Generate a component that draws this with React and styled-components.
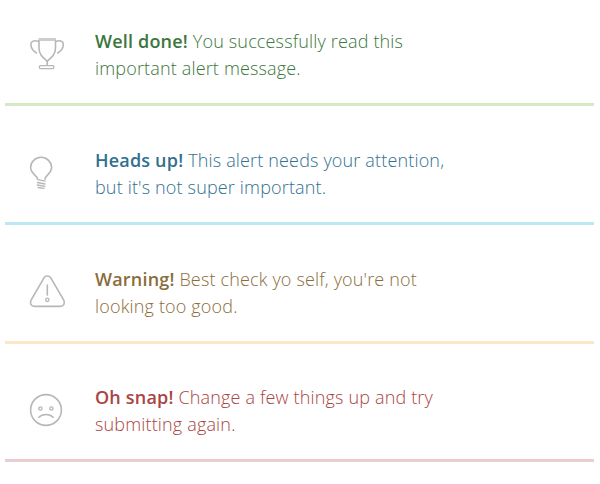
import React from "react";
import styled, { createGlobalStyle } from "styled-components";

const Global = createGlobalStyle`
  body { margin: 0; background: #fff; font-family: "Open Sans", sans-serif; }
`;
const List = styled.main`
  display: flex;
  flex-direction: column;
  padding: 0 6px 0 5px;
`;
const Alert = styled.section`
  box-sizing: border-box;
  height: ${(p) => p.$height}px;
  display: flex;
  align-items: flex-end;
  padding-bottom: 21px;
  border-bottom: 3px solid ${(p) => p.$line};
  color: ${(p) => p.$color};
`;
const Icon = styled.svg`
  flex: none;
  width: 60px;
  height: 60px;
  margin: 0 15px;
  fill: none;
  stroke: #b7b7b7;
  stroke-width: 1.6;
  stroke-linecap: round;
  stroke-linejoin: round;
`;
const Message = styled.p`
  margin: 0;
  width: 380px;
  font-size: 18px;
  line-height: 27px;
  font-weight: 300;
  letter-spacing: 0.16px;
`;
const Strong = styled.strong`
  font-weight: 600;
  letter-spacing: 0.19px;
`;

const Trophy = () => (
  <Icon viewBox="0 -3 60 60" aria-hidden="true">
    <path d="M18.5 14.5H36" strokeWidth="3" stroke="#cdcdcd" strokeLinecap="butt" />
    <path d="M19 16V23C19 29.5 23 32.5 27.2 36.2C31.5 32.5 35.5 29.5 35.5 23V16" />
    <path d="M18.5 16.2C13 14.6 10.6 17 10.9 20C11.2 23.5 13.5 26.2 16.5 28" />
    <path d="M36 16.2C41.5 14.6 43.6 17 43.3 20C43 23.5 40.8 26.2 37.8 28" />
    <path d="M27.2 36.2V40.3" />
    <rect x="19.4" y="40.6" width="14.4" height="3" rx="1" strokeWidth="1.3" />
  </Icon>
);
const Bulb = () => (
  <Icon viewBox="0 -4 60 60" aria-hidden="true">
    <path d="M17.5 34.2C17 30 10.6 28.6 10.6 22.6A10.5 10.3 0 0 1 31.6 22.6C31.6 28.6 25.5 30 25 34.2" />
    <path d="M17.8 34.7L25.1 36.2M17.3 37.5L25 39M17.3 40L25 41.4M18 42.5L24 43.4" strokeWidth="1.3" />
  </Icon>
);
const Warning = () => (
  <Icon viewBox="0 -2 60 60" aria-hidden="true">
    <path d="M24 15.8C25.4 13.4 29.3 13.4 30.8 15.8L43.6 37.8C45.6 41.2 43.8 44.4 40 44.4H14.7C10.9 44.4 9.3 41.2 11.2 37.8Z" />
    <path d="M27.3 23V33" />
    <circle cx="27.3" cy="37.8" r="1.7" strokeWidth="1.3" />
  </Icon>
);
const SadFace = () => (
  <Icon viewBox="0 -2 60 60" aria-hidden="true">
    <circle cx="26" cy="30" r="15.4" />
    <circle cx="20.4" cy="28.5" r="1.6" strokeWidth="1.4" />
    <circle cx="31.4" cy="28.5" r="1.6" strokeWidth="1.4" />
    <path d="M18.8 37.2C22.5 33.5 29.5 33.5 33.2 37.2" />
  </Icon>
);

const alerts = [
  { title: "Well done!", first: "You successfully read this", second: "important alert message.", color: "#3c763d", line: "#d6e9c6", height: 106, Glyph: Trophy },
  { title: "Heads up!", first: "This alert needs your attention,", second: "but it's not super important.", color: "#31708f", line: "#bce8f1", height: 119, Glyph: Bulb },
  { title: "Warning!", first: "Best check yo self, you're not", second: "looking too good.", color: "#8a6d3b", line: "#fce8c6", height: 119, Glyph: Warning },
  { title: "Oh snap!", first: "Change a few things up and try", second: "submitting again.", color: "#a94442", line: "#ebccd1", height: 118, Glyph: SadFace },
];

export default function App() {
  return (
    <>
      <Global />
      <List>
        {alerts.map(({ title, first, second, color, line, height, Glyph }) => (
          <Alert key={title} $height={height} $color={color} $line={line} role="alert">
            <Glyph />
            <Message><Strong>{title}</Strong> {first}<br />{second}</Message>
          </Alert>
        ))}
      </List>
    </>
  );
}
